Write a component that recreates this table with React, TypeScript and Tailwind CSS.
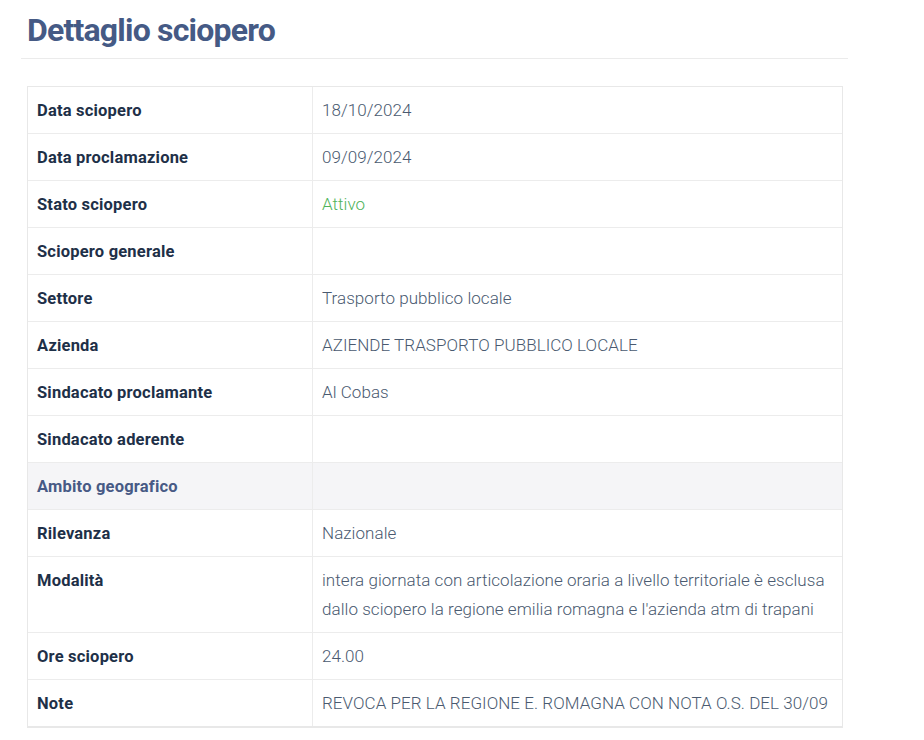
import React from 'react';

type Row = { label: string; value?: React.ReactNode; tone?: 'green'; highlight?: boolean };

const rows: Row[] = [
  { label: 'Data sciopero', value: '18/10/2024' },
  { label: 'Data proclamazione', value: '09/09/2024' },
  { label: 'Stato sciopero', value: 'Attivo', tone: 'green' },
  { label: 'Sciopero generale' },
  { label: 'Settore', value: 'Trasporto pubblico locale' },
  { label: 'Azienda', value: 'AZIENDE TRASPORTO PUBBLICO LOCALE' },
  { label: 'Sindacato proclamante', value: 'Al Cobas' },
  { label: 'Sindacato aderente' },
  { label: 'Ambito geografico', highlight: true },
  { label: 'Rilevanza', value: 'Nazionale' },
  {
    label: 'Modalità',
    value:
      "intera giornata con articolazione oraria a livello territoriale è esclusa dallo sciopero la regione emilia romagna e l'azienda atm di trapani",
  },
  { label: 'Ore sciopero', value: '24.00' },
  { label: 'Note', value: 'REVOCA PER LA REGIONE E. ROMAGNA CON NOTA O.S. DEL 30/09' },
];

export default function App() {
  return (
    <div className="min-h-screen bg-white font-['Roboto',_'Liberation_Sans',_sans-serif]">
      <div className="w-[827px] ml-[21px] pt-[12px]">
        {/* Title */}
        <h2 className="px-[6px] pb-[9px] text-[32px] leading-[37px] font-bold tracking-[-0.8px] text-[#455a85] border-b border-[#ebebeb]">
          Dettaglio sciopero
        </h2>

        {/* Detail table */}
        <div className="mt-[27px] ml-[6px] w-[816px] border border-[#e8e8e8] border-b-2">
          {rows.map((row, i) => (
            <div
              key={row.label}
              className={`grid grid-cols-[285px_1fr] ${i > 0 ? 'border-t border-[#ececec]' : ''} ${
                row.highlight ? 'bg-[#f5f5f7]' : 'bg-white'
              }`}
            >
              <div
                className={`px-[9px] pt-[9px] pb-[8px] text-[16.5px] leading-[29px] font-bold tracking-[0.2px] border-r border-[#ececec] ${
                  row.highlight ? 'text-[#475a85]' : 'text-[#1e3048]'
                }`}
              >
                {row.label}
              </div>
              <div
                className={`px-[9px] pt-[9px] pb-[8px] text-[17px] leading-[29px] font-light tracking-[0.05px] ${
                  row.tone === 'green' ? 'text-[#4fb35a]' : 'text-[#4a5a70]'
                }`}
              >
                {row.value}
              </div>
            </div>
          ))}
        </div>
      </div>
    </div>
  );
}
